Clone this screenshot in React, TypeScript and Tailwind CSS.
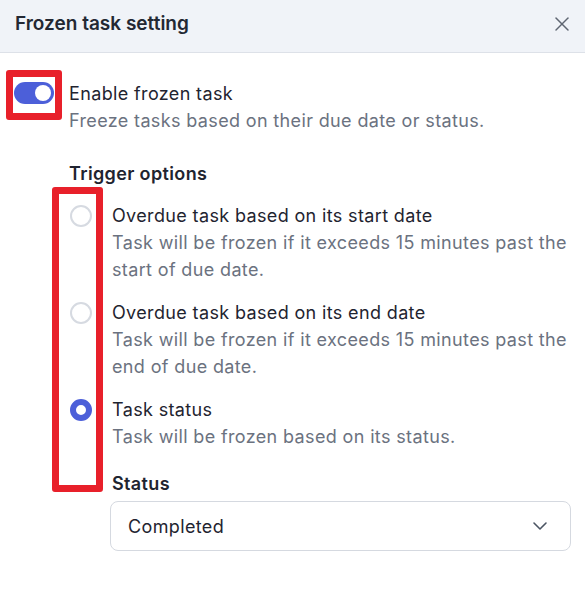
import React, { useState } from 'react';
import { X, ChevronDown } from 'lucide-react';

const options = [
  {
    id: 'start',
    title: 'Overdue task based on its start date',
    desc: 'Task will be frozen if it exceeds 15 minutes past the start of due date.',
  },
  {
    id: 'end',
    title: 'Overdue task based on its end date',
    desc: 'Task will be frozen if it exceeds 15 minutes past the end of due date.',
  },
  {
    id: 'status',
    title: 'Task status',
    desc: 'Task will be frozen based on its status.',
  },
];

export default function App() {
  const [enabled, setEnabled] = useState(true);
  const [selected, setSelected] = useState('status');

  return (
    <div
      className="relative w-[585px] h-[594px] bg-white text-[#1f2430] overflow-hidden"
      style={{ fontFamily: 'Inter, "Noto Sans", sans-serif' }}
    >
      {/* header */}
      <div className="h-[53px] px-[15px] pb-[4px] flex items-center justify-between bg-[#f0f3f8] border-b border-[#dde1e8]">
        <h1 className="text-[19px] font-semibold text-[#232833]">Frozen task setting</h1>
        <button className="text-[#5f6672] mr-[-4px]">
          <X className="w-[24px] h-[24px]" strokeWidth={1.5} />
        </button>
      </div>

      <div className="pt-[27px] pr-[12px] text-[18px] leading-[27px] tracking-[0.02em]">
        {/* enable toggle */}
        <div className="flex pl-[14px] gap-[15px]">
          <button
            onClick={() => setEnabled(!enabled)}
            className={`mt-[2px] w-[40px] h-[22px] rounded-full flex items-center px-[3px] shrink-0 ${
              enabled ? 'bg-[#4c5fd9] justify-end' : 'bg-gray-300 justify-start'
            }`}
          >
            <span className="w-[16px] h-[16px] rounded-full bg-white" />
          </button>
          <div>
            <div>Enable frozen task</div>
            <div className="text-[#6b7280]">Freeze tasks based on their due date or status.</div>
          </div>
        </div>

        {/* trigger options */}
        <div className="pl-[69px] mt-[26px]">
          <div className="font-semibold">Trigger options</div>
          <div className="mt-[15px] flex flex-col gap-[16px]">
            {options.map((o) => (
              <div key={o.id} className="flex gap-[20px] cursor-pointer" onClick={() => setSelected(o.id)}>
                <span
                  className={`mt-[3px] ml-[1px] w-[22px] h-[22px] rounded-full shrink-0 bg-white ${
                    selected === o.id ? 'border-[6px] border-[#4c5fd9]' : 'border-2 border-[#d6dae1]'
                  }`}
                />
                <div>
                  <div>{o.title}</div>
                  <div className="text-[#6b7280]">{o.desc}</div>
                </div>
              </div>
            ))}
          </div>

          <div className="pl-[43px] mt-[20px]">
            <div className="font-semibold">Status</div>
            <div className="mt-[4px] ml-[-2px] mr-[2px] h-[50px] rounded-[8px] border border-[#d5d9e0] flex items-center justify-between pl-[17px] pr-[18px]">
              <span>Completed</span>
              <ChevronDown className="w-[24px] h-[24px] text-[#4b5563]" strokeWidth={1.6} />
            </div>
          </div>
        </div>
      </div>

      {/* annotation boxes */}
      <div className="absolute left-[6px] top-[70px] w-[56px] h-[50px] border-[7px] border-[#e8202a] rounded-[3px] pointer-events-none" />
      <div className="absolute left-[52px] top-[187px] w-[51px] h-[305px] border-[7px] border-[#e8202a] rounded-[3px] pointer-events-none" />
    </div>
  );
}
